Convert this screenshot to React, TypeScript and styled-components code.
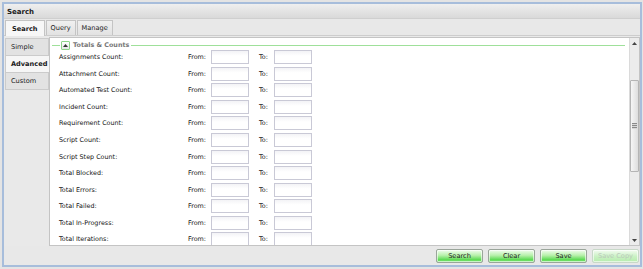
import React from "react";
import styled, { createGlobalStyle } from "styled-components";

const Global = createGlobalStyle`
  html, body { margin: 0; padding: 0; background: #e4e4e4; }
  body { width: 643px; height: 269px; overflow: hidden; font-family: "DejaVu Sans", Verdana, sans-serif; }
  * { box-sizing: border-box; }
`;

const Window = styled.div`
  margin: 2px 1px 0 2px;
  width: 640px;
  height: 265px;
  border: 2px solid #a7bddb;
  background: #e9e9e9;
  display: flex;
  flex-direction: column;
`;

const TitleBar = styled.div`
  height: 15px;
  flex: none;
  background: linear-gradient(#efefef, #d9d9d9);
  border-bottom: 1px solid #cfcfcf;
  font-size: 7px;
  font-weight: bold;
  color: #1a1a1a;
  display: flex;
  align-items: center;
  padding-left: 3px;
  padding-top: 1px;
`;

const TabStrip = styled.div`
  height: 17px;
  flex: none;
  display: flex;
  align-items: flex-end;
  gap: 1px;
  padding-left: 1px;
  border-bottom: 1px solid #cdcdcd;
  background: #e8e8e8;
`;

const Tab = styled.div<{ $active?: boolean }>`
  height: ${(p) => (p.$active ? 16 : 15)}px;
  padding: 0 ${(p) => (p.$active ? 6 : 4)}px;
  display: flex;
  align-items: center;
  font-size: 6.6px;
  font-weight: ${(p) => (p.$active ? "bold" : "normal")};
  color: #1a1a1a;
  border: 1px solid #c4c4c4;
  border-bottom: none;
  background: ${(p) => (p.$active ? "#f7f7f7" : "linear-gradient(#f0f0f0, #e2e2e2)")};
  margin-bottom: ${(p) => (p.$active ? -1 : 0)}px;
`;

const Body = styled.div`
  flex: 1;
  display: flex;
  min-height: 0;
  padding-top: 1px;
`;

const SideNav = styled.div`
  width: 45px;
  flex: none;
  display: flex;
  flex-direction: column;
  padding-left: 1px;
  padding-top: 1px;
`;

const SideTab = styled.div<{ $active?: boolean }>`
  height: 17px;
  display: flex;
  align-items: center;
  padding-left: 5px;
  font-size: 6.6px;
  font-weight: ${(p) => (p.$active ? "bold" : "normal")};
  color: #1a1a1a;
  background: ${(p) => (p.$active ? "#f6f6f6" : "#e2e2e2")};
  border: 1px solid #cbcbcb;
  border-top: none;
  border-right: ${(p) => (p.$active ? "none" : "1px solid #cbcbcb")};
  &:first-child { border-top: 1px solid #cbcbcb; height: 18px; }
`;

const Panel = styled.div`
  flex: 1;
  display: flex;
  height: 209px;
  border: 1px solid #c4c4c4;
  background: #fff;
`;

const Content = styled.div`
  flex: 1;
  overflow: hidden;
  padding: 3px 4px 0 2px;
`;

const GroupHeader = styled.div`
  height: 8px;
  display: flex;
  align-items: center;
`;

const Line = styled.div<{ $w?: number }>`
  height: 1px;
  background: #9fe09a;
  width: ${(p) => (p.$w ? `${p.$w}px` : "auto")};
  flex: ${(p) => (p.$w ? "none" : "1")};
`;

const Toggle = styled.div`
  width: 9px;
  height: 9px;
  border: 1px solid #8fd58a;
  border-radius: 1px;
  background: linear-gradient(#ffffff, #e6e6e6);
  margin-left: 1px;
  display: flex;
  align-items: center;
  justify-content: center;
`;

const GroupTitle = styled.span`
  font-size: 6.4px;
  font-weight: bold;
  color: #777;
  padding: 0 2px 0 3px;
  white-space: nowrap;
`;

const Rows = styled.div`
  padding-left: 7px;
`;

const Row = styled.div`
  height: 16.55px;
  display: grid;
  grid-template-columns: 129px 23px 38px 10px 15px 38px;
  align-items: center;
  font-size: 6.4px;
  color: #111;
`;

const Label = styled.span`
  white-space: nowrap;
`;

const Field = styled.div`
  height: 14px;
  border: 1px solid #c9c9d6;
  background: linear-gradient(#f3f3f6, #ffffff 40%);
`;

const Scrollbar = styled.div`
  width: 10px;
  flex: none;
  background: #ececec;
  border-left: 1px solid #dadada;
  display: flex;
  flex-direction: column;
  align-items: center;
`;

const Arrow = styled.div`
  height: 10px;
  width: 100%;
  display: flex;
  align-items: center;
  justify-content: center;
`;

const Track = styled.div`
  flex: 1;
  width: 100%;
  padding-top: 32px;
`;

const Thumb = styled.div`
  height: 92px;
  width: 9px;
  border: 1px solid #b5b5b5;
  border-radius: 1px;
  background: linear-gradient(90deg, #f6f6f6, #dedede);
  display: flex;
  align-items: center;
  justify-content: center;
`;

const Grip = styled.div`
  width: 5px;
  height: 6px;
  background: repeating-linear-gradient(#8a8a8a 0 1px, #d8d8d8 1px 2px);
`;

const Footer = styled.div`
  height: 19px;
  flex: none;
  display: flex;
  justify-content: flex-end;
  align-items: center;
  gap: 5px;
  padding-right: 1px;
  padding-top: 1px;
  background: #e8e8e8;
`;

const Button = styled.div<{ $disabled?: boolean }>`
  width: 47px;
  height: 14px;
  border: 1px solid ${(p) => (p.$disabled ? "#c8d8c8" : "#9aa59a")};
  border-radius: 2px;
  background: ${(p) =>
    p.$disabled
      ? "linear-gradient(#f4fbf2, #c9f1c3 55%, #b6ecae)"
      : "linear-gradient(#f3fdf0, #b6f0aa 45%, #5fdb55 80%, #7fe276)"};
  box-shadow: inset 0 0 0 1px rgba(255, 255, 255, 0.6);
  font-size: 6.6px;
  color: ${(p) => (p.$disabled ? "#b9c9b9" : "#222")};
  display: flex;
  align-items: center;
  justify-content: center;
  white-space: nowrap;
`;

const fields = [
  "Assignments Count:",
  "Attachment Count:",
  "Automated Test Count:",
  "Incident Count:",
  "Requirement Count:",
  "Script Count:",
  "Script Step Count:",
  "Total Blocked:",
  "Total Errors:",
  "Total Failed:",
  "Total In-Progress:",
  "Total Iterations:",
];

export default function App() {
  return (
    <>
      <Global />
      <Window>
        <TitleBar>Search</TitleBar>
        <TabStrip>
          <Tab $active>Search</Tab>
          <Tab>Query</Tab>
          <Tab>Manage</Tab>
        </TabStrip>
        <Body>
          <SideNav>
            <SideTab>Simple</SideTab>
            <SideTab $active>Advanced</SideTab>
            <SideTab>Custom</SideTab>
          </SideNav>
          <Panel>
            <Content>
              <GroupHeader>
                <Line $w={8} />
                <Toggle>
                  <svg width="5" height="3" viewBox="0 0 5 3">
                    <polygon points="2.5,0 5,3 0,3" fill="#333" />
                  </svg>
                </Toggle>
                <GroupTitle>Totals &amp; Counts</GroupTitle>
                <Line />
              </GroupHeader>
              <Rows>
                {fields.map((f) => (
                  <Row key={f}>
                    <Label>{f}</Label>
                    <Label>From:</Label>
                    <Field />
                    <span />
                    <Label>To:</Label>
                    <Field />
                  </Row>
                ))}
              </Rows>
            </Content>
            <Scrollbar>
              <Arrow>
                <svg width="5" height="3" viewBox="0 0 5 3">
                  <polygon points="2.5,0 5,3 0,3" fill="#444" />
                </svg>
              </Arrow>
              <Track>
                <Thumb>
                  <Grip />
                </Thumb>
              </Track>
              <Arrow>
                <svg width="5" height="3" viewBox="0 0 5 3">
                  <polygon points="0,0 5,0 2.5,3" fill="#444" />
                </svg>
              </Arrow>
            </Scrollbar>
          </Panel>
        </Body>
        <Footer>
          <Button>Search</Button>
          <Button>Clear</Button>
          <Button>Save</Button>
          <Button $disabled>Save Copy</Button>
        </Footer>
      </Window>
    </>
  );
}
